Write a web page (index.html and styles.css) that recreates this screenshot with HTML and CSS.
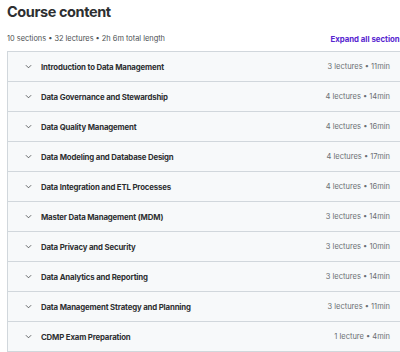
FILE: index.html
```html
<!DOCTYPE html>
<html lang="en">
<head>
	<meta charset="UTF-8">
	<title>Course content</title>
	<link rel="stylesheet" href="styles.css">
</head>
<body>
<div class="course">
	<h2 class="course-title">Course content</h2>
	<div class="course-head">
		<span class="course-meta">10 sections • 32 lectures • 2h 6m total length</span>
		<button class="expand">Expand all sections</button>
	</div>
	<ul class="sections">
		<li class="section">
			<svg class="chevron" viewBox="0 0 8 5"><path d="M1 1l3 3 3-3"/></svg>
			<span class="section-name">Introduction to Data Management</span>
			<span class="section-info">3 lectures • 11min</span>
		</li>
		<li class="section">
			<svg class="chevron" viewBox="0 0 8 5"><path d="M1 1l3 3 3-3"/></svg>
			<span class="section-name">Data Governance and Stewardship</span>
			<span class="section-info">4 lectures • 14min</span>
		</li>
		<li class="section">
			<svg class="chevron" viewBox="0 0 8 5"><path d="M1 1l3 3 3-3"/></svg>
			<span class="section-name">Data Quality Management</span>
			<span class="section-info">4 lectures • 16min</span>
		</li>
		<li class="section">
			<svg class="chevron" viewBox="0 0 8 5"><path d="M1 1l3 3 3-3"/></svg>
			<span class="section-name">Data Modeling and Database Design</span>
			<span class="section-info">4 lectures • 17min</span>
		</li>
		<li class="section">
			<svg class="chevron" viewBox="0 0 8 5"><path d="M1 1l3 3 3-3"/></svg>
			<span class="section-name">Data Integration and ETL Processes</span>
			<span class="section-info">4 lectures • 16min</span>
		</li>
		<li class="section">
			<svg class="chevron" viewBox="0 0 8 5"><path d="M1 1l3 3 3-3"/></svg>
			<span class="section-name">Master Data Management (MDM)</span>
			<span class="section-info">3 lectures • 14min</span>
		</li>
		<li class="section">
			<svg class="chevron" viewBox="0 0 8 5"><path d="M1 1l3 3 3-3"/></svg>
			<span class="section-name">Data Privacy and Security</span>
			<span class="section-info">3 lectures • 10min</span>
		</li>
		<li class="section">
			<svg class="chevron" viewBox="0 0 8 5"><path d="M1 1l3 3 3-3"/></svg>
			<span class="section-name">Data Analytics and Reporting</span>
			<span class="section-info">3 lectures • 14min</span>
		</li>
		<li class="section">
			<svg class="chevron" viewBox="0 0 8 5"><path d="M1 1l3 3 3-3"/></svg>
			<span class="section-name">Data Management Strategy and Planning</span>
			<span class="section-info">3 lectures • 11min</span>
		</li>
		<li class="section">
			<svg class="chevron" viewBox="0 0 8 5"><path d="M1 1l3 3 3-3"/></svg>
			<span class="section-name">CDMP Exam Preparation</span>
			<span class="section-info">1 lecture • 4min</span>
		</li>
	</ul>
</div>
</body>
</html>
```
FILE: styles.css
```css
* {
	box-sizing: border-box;
}

html {
	overflow: hidden;
}

body {
	margin: 0;
	padding: 0 0 0 7px;
	color: #2d2f31;
	font-family: Inter, "Noto Sans", sans-serif;
	background-color: #fff;
}

.course {
	width: 397px;
}

.course-title {
	margin: 0;
	padding-top: 1px;
	font-size: 14.5px;
	line-height: 21px;
	font-weight: 700;
	letter-spacing: -0.4px;
}

.course-head {
	display: flex;
	justify-content: space-between;
	align-items: center;
	height: 29px;
	padding: 6px 0 2px;
}

.course-meta {
	font-size: 7.4px;
	color: #4b4f52;
}

.expand {
	padding: 0;
	border: none;
	background: none;
	font-family: inherit;
	font-size: 7.8px;
	font-weight: 700;
	color: #5624d0;
	white-space: nowrap;
	cursor: pointer;
}

.sections {
	margin: 0;
	padding: 0;
	list-style: none;
	border: 1px solid #d1d7dc;
	border-bottom: none;
}

.section {
	display: flex;
	align-items: center;
	height: 30px;
	padding: 0 13px 0 17px;
	border-bottom: 1px solid #d1d7dc;
	background-color: #f7f9fa;
}

.chevron {
	width: 7px;
	height: 5px;
	margin-right: 9px;
	fill: none;
	stroke: #3e4143;
	stroke-width: 0.9;
}

.section-name {
	flex: 1;
	font-size: 7.8px;
	font-weight: 700;
	letter-spacing: -0.15px;
}

.section-info {
	font-size: 7.5px;
	color: #6a6f73;
}
```
